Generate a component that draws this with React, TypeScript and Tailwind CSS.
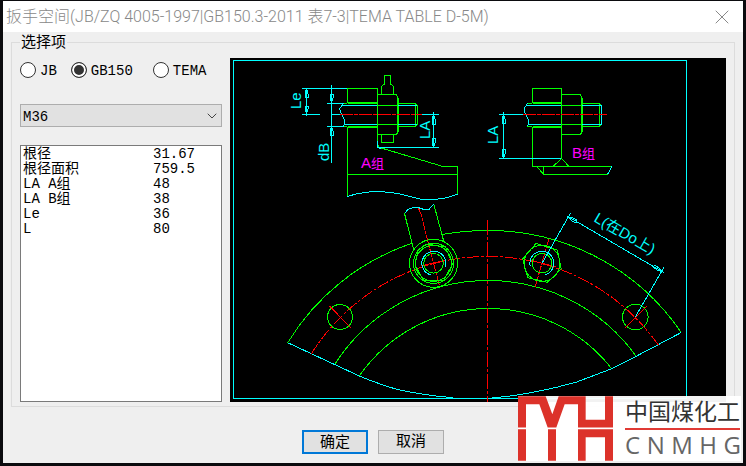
import { useState } from 'react'
import { ChevronDown, X } from 'lucide-react'

const STANDARDS = ['JB', 'GB150', 'TEMA']
const BOLT_SIZES = ['M30', 'M36', 'M42']

const RESULTS = [
  { label: '根径', value: '31.67' },
  { label: '根径面积', value: '759.5' },
  { label: 'LA A组', value: '48' },
  { label: 'LA B组', value: '38' },
  { label: 'Le', value: '36' },
  { label: 'L', value: '80' }
]

export default function App() {
  return (
    <div className="min-h-screen bg-[#0b0b0e] pt-px px-[3px] pb-[3px] flex flex-col font-['Liberation_Mono','Noto_Sans_CJK_SC',monospace] text-sm text-black">
      <main className="relative flex-1 flex flex-col bg-[#efefef]">
        <TitleBar />
        <fieldset className="mx-2 border border-[#dcdcdc] px-2 pb-1 min-w-0">
          <legend className="px-px h-5 leading-6 text-[15px]">选择项</legend>
          <div className="flex gap-2 pt-1.5">
            <Options />
            <div className="flex-1 min-w-0 bg-black">
              <FlangeDrawing />
            </div>
          </div>
        </fieldset>
        <div className="flex justify-center gap-2.5 pt-[23px]">
          <button
            type="button"
            className="w-[66px] h-6 pt-0.5 leading-5 text-[15px] bg-[#e1e1e1] border-2 border-[#0078d7]"
          >
            确定
          </button>
          <button
            type="button"
            className="w-[66px] h-6 pt-0.5 leading-5 text-[15px] bg-[#e1e1e1] border border-[#adadad]"
          >
            取消
          </button>
        </div>
        <Watermark />
      </main>
    </div>
  )
}

function TitleBar() {
  return (
    <header className="h-[31px] bg-white flex items-center justify-between pl-[3px] pr-[9px]">
      <h1 className="font-['Roboto','Noto_Sans_CJK_SC',sans-serif] font-light text-base leading-5 text-[#888] whitespace-nowrap">
        扳手空间(JB/ZQ 4005-1997|GB150.3-2011 表7-3|TEMA TABLE D-5M)
      </h1>
      <button type="button" aria-label="关闭" className="text-[#888]">
        <X size={24} strokeWidth={1} />
      </button>
    </header>
  )
}

function Options() {
  const [standard, setStandard] = useState('GB150')
  const [size, setSize] = useState('M36')

  return (
    <div className="w-[202px] shrink-0 flex flex-col pt-1">
      <div className="flex h-4">
        {STANDARDS.map((name) => (
          <label
            key={name}
            className="flex items-center gap-1 mr-3.5 nth-[2]:mr-5 last:mr-0 leading-4"
          >
            <input
              type="radio"
              name="standard"
              value={name}
              checked={standard === name}
              onChange={() => setStandard(name)}
              className="appearance-none size-4 shrink-0 rounded-full border border-[#333] bg-white checked:bg-[#333] checked:shadow-[inset_0_0_0_2px_#fff]"
            />
            <span className="pt-0.5">{name}</span>
          </label>
        ))}
      </div>

      <div className="relative mt-[26px]">
        <select
          aria-label="螺栓规格"
          value={size}
          onChange={(e) => setSize(e.target.value)}
          className="appearance-none block w-full h-[23px] pl-0.5 pt-0.5 border border-[#adadad] bg-[#e1e1e1]"
        >
          {BOLT_SIZES.map((s) => (
            <option key={s}>{s}</option>
          ))}
        </select>
        <ChevronDown
          size={16}
          strokeWidth={1.5}
          className="absolute right-0.5 top-1 text-[#444] pointer-events-none"
        />
      </div>

      <div className="flex-1 mt-[18px] border border-[#7a7a7a] bg-white px-0.5 pt-px">
        <table className="w-full leading-[15px] text-left">
          <tbody>
            {RESULTS.map((row) => (
              <tr key={row.label} className="h-[15px]">
                <th scope="row" className="w-[130px] p-0 font-normal">
                  {row.label}
                </th>
                <td className="p-0">{row.value}</td>
              </tr>
            ))}
          </tbody>
        </table>
      </div>
    </div>
  )
}

function FlangeDrawing() {
  return (
    <svg
      viewBox="230 58 496 344"
      className="block w-full font-['Liberation_Sans_Narrow','Liberation_Sans','Noto_Sans_CJK_SC',sans-serif]"
      fill="none"
      shapeRendering="crispEdges"
      role="img"
      aria-label="扳手空间示意图"
    >
      {/* Frame */}
      <rect x="233.5" y="60.5" width="453" height="338" stroke="#0ff" />
      <SectionA />
      <SectionB />
      <FlangePlan />
    </svg>
  )
}

function SectionA() {
  return (
    <g>
      <g stroke="#0f0">
        <path d="M347.5 88.5H377.5V102.5H347.5ZM347.5 103.5H377.5" />
        <path d="M347.5 126.5H377.5M347.5 127.5H377.5M347.5 127V196M377.5 88V142" />
        <path d="M377.5 94.5H396.5L398.5 99V131L396.5 134.5H377.5M397.5 97V132M377.5 105.5H397M377.5 124.5H397" />
        <path d="M381.5 94.5V86.5L384.5 84V75.5H390.5V84L393.5 86.5V94.5" />
        <path d="M381.5 134.5V142.5H393.5V134.5" />
        <path d="M343 103.5H347M343 126.5H347M398.5 103.5H415.5L417.5 105.5V124.5L415.5 126.5H398.5M415.5 103.5V126.5" />
        <path d="M378 145L379.5 147.5L443 166.5H457.5V194.5M347.5 174.5H457.5" />
      </g>
      <g stroke="#0ff">
        <path d="M302 88.5H347M302 114.5H320M306.5 88V114" />
        <path d="M306.5 88L305 94V97H308V94ZM306.5 114L305 109V106H308V109Z" />
        <path d="M331.5 85V163M327 103.5H344M327 126.5H344M331.5 114.5H340" />
        <path d="M331.5 103L330 98V94H333V98ZM331.5 127L330 131V135H333V131Z" />
        <path d="M343.5 103.5L339.5 109L341.5 114L344.5 120V124L343.5 126.5" />
        <path d="M342 105.5H377M344 124.5H377M398 105.5H417M398 124.5H417" />
        <path d="M422 114.5H439M433.5 114V147M377 147.5H439M377.5 141V147.5L381 148.5" />
        <path d="M433.5 114L432 119V124H435V119ZM433.5 147L432 143V138H435V143Z" />
        <path d="M347.5 196.5L356 194L372 191.5H380L398 193.5L420 199H438L448 197.5L457.5 194" />
      </g>
      <path d="M340 114.5H422" stroke="#f00" strokeDasharray="13 1 4 1" />
      <g fill="#0ff" fontSize="15">
        <text transform="rotate(-90 301 109)" x="301" y="109">
          Le
        </text>
        <text transform="rotate(-90 329 161)" x="329" y="161">
          dB
        </text>
        <text transform="rotate(-90 430 139)" x="430" y="139">
          LA
        </text>
        <text x="361" y="168" fill="#f0f">
          A<tspan fontSize="13">组</tspan>
        </text>
      </g>
    </g>
  )
}

function SectionB() {
  return (
    <g>
      <g stroke="#0f0">
        <path d="M532.5 88.5H561.5V102.5H532.5ZM532.5 103.5H561.5" />
        <path d="M532.5 126.5H561.5M532.5 127.5H561.5M532.5 127V166.5M561.5 88V158" />
        <path d="M561.5 94.5H580.5L582.5 99V131L580.5 134.5H561.5M581.5 97V132M561.5 105.5H581M561.5 124.5H581" />
        <path d="M527 103.5H532M527 126.5H532M582.5 103.5H599.5L601.5 105.5V124.5L599.5 126.5H582.5M599.5 103.5V126.5" />
        <path d="M532.5 166.5H612M543.5 166.5V174.5H608M537 166.5L543.5 174.5M553 166.5L561.5 158.5L569 166.5" />
      </g>
      <g stroke="#0ff">
        <path d="M527.5 103.5L524.5 108V112L528.5 120V124L527.5 126.5" />
        <path d="M526 105.5H561M528 124.5H561M582 105.5H601M582 124.5H601M601.5 105V125" />
        <path d="M499 114.5H523M503.5 114V158M499 158.5H561M612 166.5L607.5 174.5" />
        <path d="M503.5 114L502 119V123H505V119ZM503.5 158L502 154V149H505V154Z" />
      </g>
      <path d="M523 114.5H607" stroke="#f00" strokeDasharray="13 1 4 1" />
      <g fill="#0ff" fontSize="15">
        <text transform="rotate(-90 498 144)" x="498" y="144">
          LA
        </text>
        <text x="572" y="158" fill="#f0f">
          B<tspan fontSize="13">组</tspan>
        </text>
      </g>
    </g>
  )
}

function FlangePlan() {
  return (
    <g>
      {/* Flange rings */}
      <g stroke="#0f0">
        <path d="M287.7 342.7A233 233 0 0 1 411.7 243.3M442 234.5Q465 230.5 487.5 230.5A233 233 0 0 1 681.3 332.5" />
        <path d="M334.3 365A182 182 0 0 1 487.5 280.5A182 182 0 0 1 636 356" />
        <path d="M359.3 376A157 157 0 0 1 487.5 308.5A157 157 0 0 1 611.7 368.7" />
        <circle cx="340" cy="317" r="12.5" />
        <circle cx="635.3" cy="317" r="12.8" />
      </g>
      <path
        d="M287.7 342.7L359.3 376Q380 384.5 396.7 389.3Q425 395.5 452.7 397.7M491.7 397.7Q512 396.5 533 392.3Q556 388 576.7 382L611.7 368.7L636.7 356L681.3 332.5"
        stroke="#0ff"
      />

      {/* Centre lines */}
      <g stroke="#f00">
        <path d="M487.5 220V402" strokeDasharray="15 2 3 2" />
        <path
          d="M311 354.3A208 208 0 0 1 487.5 256.5A208 208 0 0 1 658.3 345"
          strokeDasharray="12 2 3 2"
        />
        <path d="M329.5 306L351.5 328.5M646.5 306.5L624.5 328.5" />
        <path
          d="M418.5 208.5L421 214L427 238L439.5 286M548.7 239.3L535.3 286.7"
          strokeDasharray="9 1 3 1"
        />
        <path d="M421 266L446 260M530 260L556 267" />
      </g>

      {/* Left bolt with wrench */}
      <g stroke="#0f0">
        <path d="M404.5 213.5L414 251M433.7 204L443.7 241" />
        <circle cx="433.5" cy="263.3" r="24" />
        <circle cx="433.5" cy="263.3" r="20" />
        <circle cx="433.5" cy="263.3" r="18" />
        <path d="M427 244L445.5 247L452.5 264L444 280L424 281L415 265L418 250Z" />
        <circle cx="433.5" cy="263.3" r="9.8" />
      </g>
      <path
        d="M404.5 213.5L408 209.5L413 207.5H418L424 209.5H429L433.7 204"
        stroke="#0ff"
      />
      <path d="M445.4 266.5A12 12 0 1 0 430.5 274.8" stroke="#0ff" />

      {/* Right bolt */}
      <g stroke="#0f0">
        <path d="M536 243.5L557.3 250L561.3 269L547.3 282.3L527.7 277.7L522.7 259Z" />
        <circle cx="542" cy="263.3" r="18" />
        <circle cx="542" cy="263.3" r="9.8" />
      </g>
      <path d="M530.3 266.5A12 12 0 1 1 545 274.8" stroke="#0ff" />

      {/* Pitch dimension */}
      <g stroke="#0ff">
        <path d="M542 263.3L570.7 212.7M635.3 317L664.3 266.7M568.3 216.7L662.3 271.7" />
        <path d="M568.3 216.7L572 221L576 223L577 220L573 218ZM662.3 271.7L657 270L653 267L655 265L659 268Z" />
      </g>
      <text transform="rotate(30 593 221)" x="593" y="221" fontSize="15" fill="#0ff">
        L(在Do上)
      </text>
    </g>
  )
}

function Watermark() {
  return (
    <div className="absolute right-0.5 bottom-0.5 w-[223px] h-[65px] flex bg-white/95">
      <svg
        viewBox="12 12 285 194"
        className="w-[95px] h-[65px] shrink-0"
        fill="#dc322a"
        aria-hidden="true"
      >
        <path d="M12 12H95L115 66L134 12H215V83H273V12H297V106H192V36H152L127 106H101L76 36H36V106H12Z" />
        <path d="M12 111H36V206H12ZM102 111H126V206H102ZM192 111H215V206H192ZM273 111H297V206H273ZM215 111H273V135H215Z" />
      </svg>
      <div className="flex-1 ml-3 flex flex-col">
        <div className="h-8 leading-7 text-[23px] text-[#333] font-['Noto_Sans_CJK_SC',sans-serif]">
          中国煤化工
        </div>
        <div className="h-0.5 mr-px bg-[#e03a35]" />
        <div className="flex justify-between leading-[30px] text-2xl text-[#666] font-['Open_Sans',sans-serif]">
          {['C', 'N', 'M', 'H', 'G'].map((letter) => (
            <span key={letter}>{letter}</span>
          ))}
        </div>
      </div>
    </div>
  )
}
